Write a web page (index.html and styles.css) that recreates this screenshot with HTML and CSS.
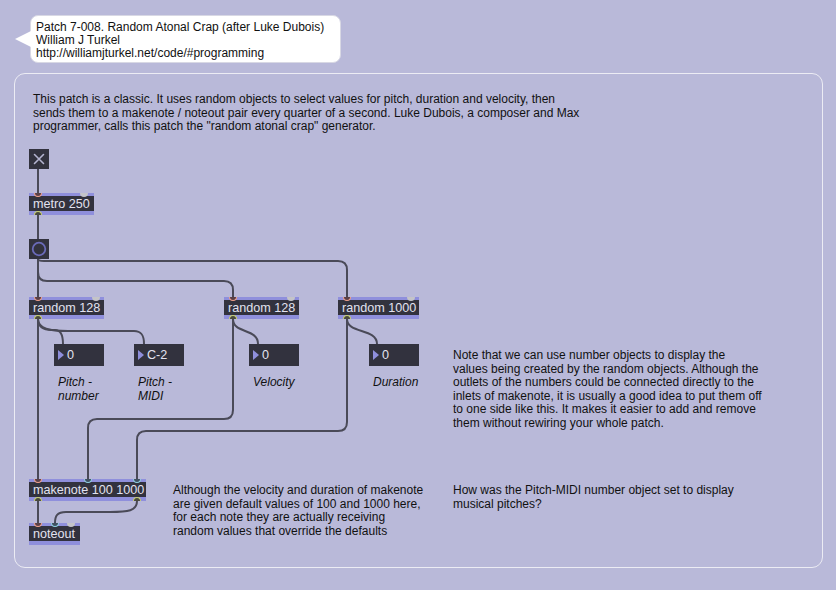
FILE: index.html
```html
<!DOCTYPE html>
<html>
<head>
<meta charset="utf-8">
<link rel="stylesheet" href="styles.css">
</head>
<body>
<div class="canvas">
  <div class="bubble">Patch 7-008. Random Atonal Crap (after Luke Dubois)<br>William J Turkel<br>http://williamjturkel.net/code/#programming</div>
  <div class="panel"></div>

  <div class="comment intro">This patch is a classic. It uses random objects to select values for pitch, duration and velocity, then<br>sends them to a makenote / noteout pair every quarter of a second. Luke Dubois, a composer and Max<br>programmer, calls this patch the "random atonal crap" generator.</div>

  <svg class="cords" width="836" height="590" viewBox="0 0 836 590">
    <g fill="none" stroke="#4a4a58" stroke-width="2" stroke-linecap="round">
      <path d="M38 169 V193"/>
      <path d="M38 215 V239"/>
      <path d="M38 259 V297"/>
      <path d="M38 259 V272 Q38 281 47 281 H224 Q233 281 233 290 V297"/>
      <path d="M38 259 Q38 261 44 261 H338 Q347 261 347 270 V297"/>
      <path d="M38 319 C38 328 45 330 52 330 H55 C61 330 63 335 63 344"/>
      <path d="M38 319 C38 329 50 331 68 331 H134 C142 331 144 336 144 344"/>
      <path d="M233 319 C233 334 258 328 258 344"/>
      <path d="M347 319 C347 334 377 328 377 344"/>
      <path d="M38 319 V479"/>
      <path d="M233 319 V410 Q233 419 224 419 H97 Q88 419 88 428 V479"/>
      <path d="M347 319 V422 Q347 431 338 431 H146 Q137 431 137 440 V479"/>
      <path d="M38 501 V523"/>
      <path d="M137 501 C137 511 128 512 110 512 H66 C57 512 55 516 55 523"/>
    </g>
  </svg>

  <div class="toggle">
    <svg width="20" height="20" viewBox="0 0 20 20"><path d="M5.5 5.5 L14.5 14.5 M14.5 5.5 L5.5 14.5" stroke="#b4b4d0" stroke-width="1.6" stroke-linecap="round"/></svg>
  </div>

  <div class="obj metro">metro 250
    <span class="in hot" style="left:5px"></span><span class="in idle" style="left:51px"></span><span class="out" style="left:5px"></span>
  </div>

  <div class="bang">
    <svg width="20" height="20" viewBox="0 0 20 20"><circle cx="10" cy="10" r="6.3" fill="none" stroke="#6a6ab8" stroke-width="1.8"/></svg>
  </div>

  <div class="obj r1">random 128
    <span class="in hot" style="left:5px"></span><span class="in idle" style="left:63px"></span><span class="out" style="left:5px"></span>
  </div>
  <div class="obj r2">random 128
    <span class="in hot" style="left:5px"></span><span class="in idle" style="left:63px"></span><span class="out" style="left:5px"></span>
  </div>
  <div class="obj r3">random 1000
    <span class="in hot" style="left:5px"></span><span class="in idle" style="left:69px"></span><span class="out" style="left:5px"></span>
  </div>

  <div class="num n1"><span class="tri"></span>0</div>
  <div class="num n2"><span class="tri"></span>C-2</div>
  <div class="num n3"><span class="tri"></span>0</div>
  <div class="num n4"><span class="tri"></span>0</div>

  <div class="label l1">Pitch -<br>number</div>
  <div class="label l2">Pitch -<br>MIDI</div>
  <div class="label l3">Velocity</div>
  <div class="label l4">Duration</div>

  <div class="obj makenote">makenote 100 1000
    <span class="in hot" style="left:5px"></span><span class="in cold" style="left:55px"></span><span class="in cold" style="left:104px"></span>
    <span class="out" style="left:5px"></span><span class="out" style="left:104px"></span>
  </div>
  <div class="obj noteout">noteout
    <span class="in hot" style="left:5px"></span><span class="in cold" style="left:22px"></span><span class="in idle" style="left:38px"></span>
  </div>

  <div class="comment note">Note that we can use number objects to display the<br>values being created by the random objects. Although the<br>outlets of the numbers could be connected directly to the<br>inlets of makenote, it is usually a good idea to put them off<br>to one side like this. It makes it easier to add and remove<br>them without rewiring your whole patch.</div>

  <div class="comment although">Although the velocity and duration of makenote<br>are given default values of 100 and 1000 here,<br>for each note they are actually receiving<br>random values that override the defaults</div>

  <div class="comment how">How was the Pitch-MIDI number object set to display<br>musical pitches?</div>
</div>
</body>
</html>
```

FILE: styles.css
```css
html, body {
  margin: 0;
  padding: 0;
  background: #b9b9d9;
}
.canvas {
  position: relative;
  width: 836px;
  height: 590px;
  overflow: hidden;
  background: #b9b9d9;
  font-family: "Liberation Sans", Arial, sans-serif;
  font-size: 12px;
  color: #111;
}
.bubble {
  position: absolute;
  left: 30px;
  top: 15px;
  width: 311px;
  height: 48px;
  box-sizing: border-box;
  padding: 5px 0 0 5px;
  background: #fff;
  border: 1px solid #d8d8e4;
  border-radius: 8px;
  line-height: 13px;
  color: #111;
}
.bubble::before {
  content: "";
  position: absolute;
  left: -16px;
  top: 15px;
  border-style: solid;
  border-width: 8px 16px 8px 0;
  border-color: transparent #fff transparent transparent;
}
.panel {
  position: absolute;
  left: 14px;
  top: 73px;
  width: 809px;
  height: 495px;
  box-sizing: border-box;
  border: 1px solid #ececf4;
  border-radius: 11px;
}
.comment {
  position: absolute;
  line-height: 13.5px;
  white-space: nowrap;
}
.intro { left: 33px; top: 93px; }
.note { left: 453px; top: 349px; }
.although { left: 173px; top: 484px; }
.how { left: 453px; top: 484px; }
.cords {
  position: absolute;
  left: 0;
  top: 0;
}
.toggle, .bang {
  position: absolute;
  left: 29px;
  width: 20px;
  height: 20px;
  background: #32323e;
}
.toggle { top: 149px; }
.bang { top: 239px; }
.toggle svg, .bang svg { display: block; }
.obj {
  position: absolute;
  height: 22px;
  box-sizing: border-box;
  border-top: 3px solid #8f8fdc;
  border-bottom: 4px solid #8f8fdc;
  background: #32323e;
  color: #e2e2f0;
  font-size: 12.6px;
  line-height: 16px;
  padding-left: 4px;
  white-space: nowrap;
}
.metro { left: 29px; top: 193px; width: 65px; }
.r1 { left: 29px; top: 297px; width: 75px; }
.r2 { left: 224px; top: 297px; width: 75px; }
.r3 { left: 338px; top: 297px; width: 81px; }
.makenote { left: 29px; top: 479px; width: 117px; }
.noteout { left: 29px; top: 523px; width: 51px; }
.in, .out {
  position: absolute;
  width: 8px;
  height: 4px;
  box-sizing: border-box;
}
.in {
  top: -3px;
  border-radius: 0 0 4px 4px;
}
.out {
  bottom: -4px;
  border-radius: 4px 4px 0 0;
  border: 1.5px solid #c8d070;
  border-bottom: none;
  background: #4a4a40;
}
.in.hot {
  border: 1.5px solid #f0a08c;
  border-top: none;
  background: #5a4048;
}
.in.cold {
  border: 1.5px solid #90d0e0;
  border-top: none;
  background: #405060;
}
.in.idle {
  background: #c4c4c8;
  width: 8px;
}
.num {
  position: absolute;
  top: 344px;
  width: 50px;
  height: 22px;
  background: #32323e;
  color: #e2e2f0;
  line-height: 22px;
  font-size: 12.6px;
  padding-left: 13px;
  box-sizing: border-box;
}
.tri {
  position: absolute;
  left: 4px;
  top: 6px;
  border-style: solid;
  border-width: 5px 0 5px 6px;
  border-color: transparent transparent transparent #8f8fdc;
}
.n1 { left: 54px; }
.n2 { left: 134px; }
.n3 { left: 249px; }
.n4 { left: 369px; }
.label {
  position: absolute;
  top: 376px;
  font-style: italic;
  line-height: 13.5px;
  color: #111;
}
.l1 { left: 58px; }
.l2 { left: 138px; }
.l3 { left: 253px; }
.l4 { left: 373px; }
```
